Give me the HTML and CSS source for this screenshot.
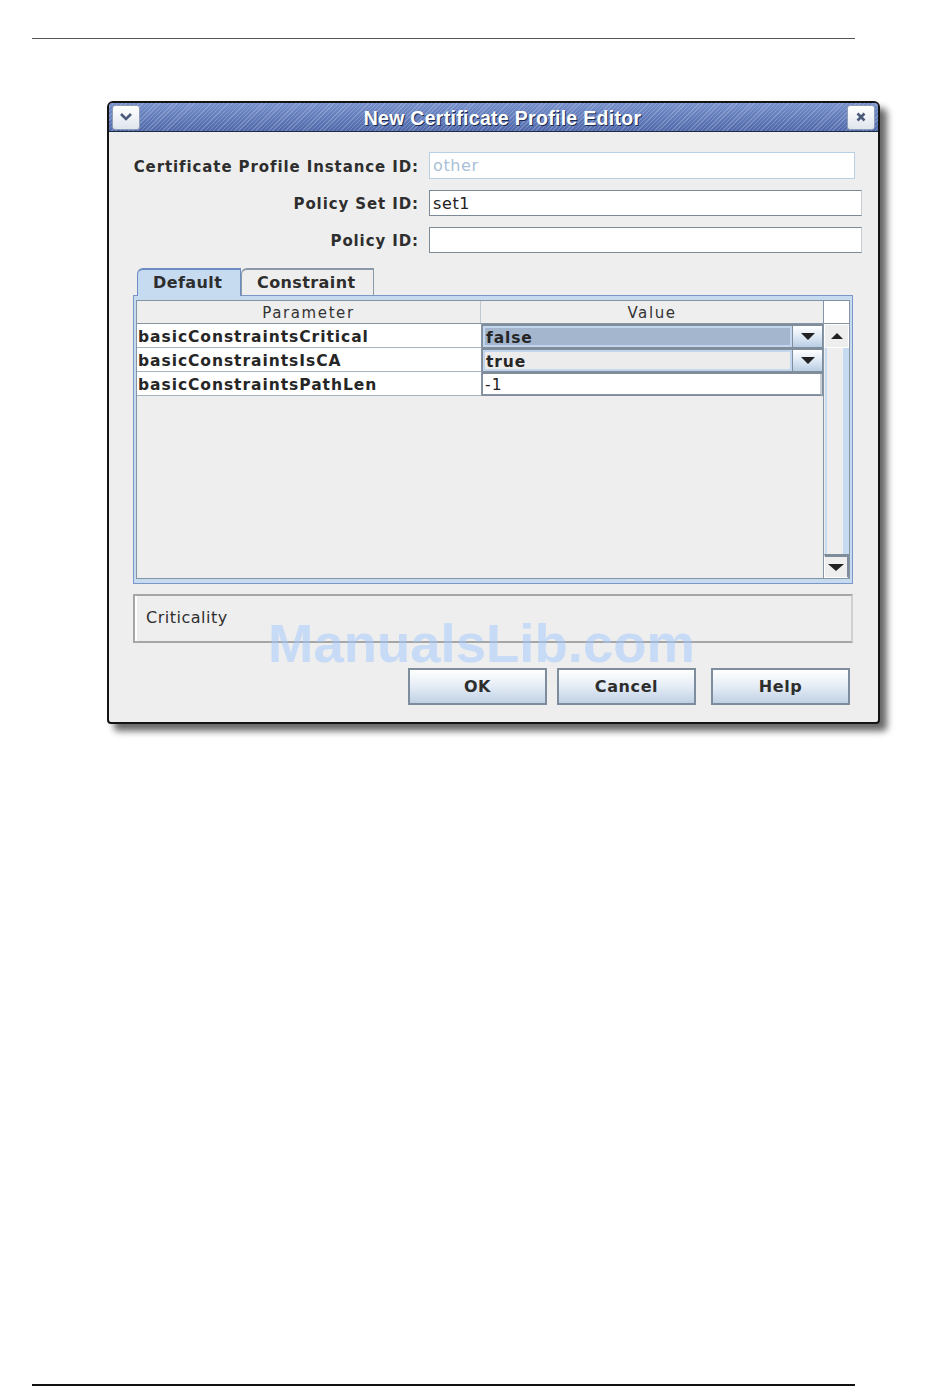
FILE: index.html
```html
<html>
  <head>
    <title>New Certificate Profile Editor</title>
    <link rel="stylesheet" href="styles.css">
  </head>
  <body>
    <div class="rule top"></div>

    <div class="dialog">
      <div class="titlebar">
        <span class="tbtn">
          <svg width="14" height="10" viewBox="0 0 14 10">
            <path d="M2 2 L7 7 L12 2" fill="none" stroke="#4a5a78" stroke-width="2.6" />
          </svg>
        </span>
        <span class="title">New Certificate Profile Editor</span>
        <span class="tbtn">
          <svg width="12" height="12" viewBox="0 0 12 12">
            <path d="M2.5 2.5 L9.5 9.5 M9.5 2.5 L2.5 9.5" stroke="#4a5a78" stroke-width="2.6" />
          </svg>
        </span>
      </div>

      <div class="content">
        <div class="form">
          <div class="label">Certificate Profile Instance ID:</div>
          <div class="field disabled first">other</div>
          <div class="label">Policy Set ID:</div>
          <div class="field">set1</div>
          <div class="label">Policy ID:</div>
          <div class="field"></div>
        </div>

        <div class="tabs">
          <div class="tab active">Default</div>
          <div class="tab">Constraint</div>
        </div>

        <div class="panel">
          <div class="scroll">
            <div class="table">
              <div class="thead">
                <div class="th param">Parameter</div>
                <div class="th">Value</div>
              </div>
              <div class="tr">
                <div class="td param">basicConstraintsCritical</div>
                <div class="td value">
                  <div class="combo selected">
                    <span class="combo-text">false</span>
                    <span class="arrow"><i></i></span>
                  </div>
                </div>
              </div>
              <div class="tr">
                <div class="td param">basicConstraintsIsCA</div>
                <div class="td value">
                  <div class="combo">
                    <span class="combo-text">true</span>
                    <span class="arrow"><i></i></span>
                  </div>
                </div>
              </div>
              <div class="tr">
                <div class="td param">basicConstraintsPathLen</div>
                <div class="td value">
                  <div class="edit">-1</div>
                </div>
              </div>
            </div>
            <div class="vbar">
              <div class="corner"></div>
              <div class="sbtn"><i class="up"></i></div>
              <div class="track"></div>
              <div class="sbtn down"><i></i></div>
            </div>
          </div>
        </div>

        <div class="crit">Criticality</div>

        <div class="buttons">
          <button class="btn">OK</button>
          <button class="btn">Cancel</button>
          <button class="btn help">Help</button>
        </div>

        <div class="watermark">ManualsLib.com</div>
      </div>
    </div>

    <div class="rule bottom"></div>
  </body>
</html>
```

FILE: styles.css
```css
body {
  margin: 0;
  background: #fff;
  font: 15px "DejaVu Sans", sans-serif;
  color: #2e2e2e;
}

.rule {
  margin-left: 32px;
  width: 823px;
}
.rule.top {
  margin-top: 38px;
  height: 1px;
  background: #555;
}
.rule.bottom {
  margin-top: 660px;
  height: 2px;
  background: #111;
}

/* window */
.dialog {
  margin-top: 62px;
  margin-left: 107px;
  width: 769px;
  height: 619px;
  border: 2px solid #141414;
  border-radius: 6px 6px 4px 4px;
  background: #eeeeee;
  box-shadow: 7px 7px 7px rgba(0, 0, 0, 0.6);
  display: flex;
  flex-direction: column;
  overflow: hidden;
}

.titlebar {
  height: 28px;
  border-bottom: 1px solid #1e2a44;
  display: flex;
  align-items: center;
  justify-content: space-between;
  padding: 0 3px;
  background:
    repeating-linear-gradient(135deg, rgba(255, 255, 255, 0.2) 0 1px, transparent 1px 3px),
    linear-gradient(#7690cc, #5069aa);
}
.title {
  font: bold 19.5px "Liberation Sans", sans-serif;
  color: #fff;
  text-shadow: 1px 1px 0 #1d2b4e;
  letter-spacing: 0.3px;
  padding: 3px 0 0 18px;
}
.tbtn {
  width: 28px;
  height: 25px;
  box-sizing: border-box;
  border: 1px solid #8e9cb6;
  border-radius: 3px;
  background: linear-gradient(#ffffff, #dfe5ee);
  display: flex;
  align-items: center;
  justify-content: center;
}

.content {
  position: relative;
  flex: 1;
  padding: 20px 16px 0 24px;
}

/* top form */
.form {
  display: grid;
  grid-template-columns: 286px 1fr;
  column-gap: 10px;
  row-gap: 11px;
  align-items: center;
}
.form .label {
  text-align: right;
  font-weight: bold;
  font-size: 15px;
  letter-spacing: 0.9px;
  padding-top: 2px;
  color: #2e2e2e;
}
.field {
  height: 26px;
  box-sizing: border-box;
  border: 1px solid #7c8a98;
  border-right-color: #c6ccd2;
  background: #fff;
  padding: 3px 3px 0;
  font-size: 16px;
  letter-spacing: 0.6px;
  color: #222;
}
.field.first {
  height: 27px;
  margin-right: 7px;
}
.field.disabled {
  border-color: #b8cfe6;
  color: #a9bfd6;
}

/* tabs */
.tabs {
  display: flex;
  margin-top: 15px;
  padding-left: 4px;
  height: 28px;
  margin-right: 9px;
}
.tab {
  box-sizing: border-box;
  height: 28px;
  border: 1px solid #8a98a8;
  border-top-width: 2px;
  border-bottom: 0;
  border-radius: 6px 0 0 0;
  padding: 3px 0 0 15px;
  width: 133px;
  font-weight: bold;
  font-size: 16px;
  letter-spacing: 0.4px;
  color: #2e2e2e;
}
.tab.active {
  width: 104px;
  background: #c6daf0;
  border-color: #6e8cc4;
}

.panel {
  margin-right: 9px;
  margin-top: -1px;
  height: 279px;
  border: 1px solid #7b97c8;
  background: #c6daf0;
  padding: 4px 2px;
  display: flex;
}

.scroll {
  flex: 1;
  display: flex;
  border: 1px solid #8595a6;
  background: #eeeeee;
}

/* table */
.table {
  width: 686px;
}
.thead {
  display: flex;
  height: 23px;
  box-sizing: border-box;
  border-bottom: 1px solid #8595a6;
}
.th {
  flex: 1;
  text-align: center;
  font-size: 15px;
  letter-spacing: 1.6px;
  color: #333;
  line-height: 24px;
  background: #eee;
}
.th.param {
  flex: 0 0 343px;
  border-right: 1px solid #c0c8d0;
}
.tr {
  display: flex;
  height: 24px;
  box-sizing: border-box;
}
.td.param {
  flex: 0 0 343px;
  background: #fff;
  border-right: 1px solid #8595a6;
  border-bottom: 1px solid #a8b2bc;
  padding-left: 1px;
  font-weight: bold;
  font-size: 15.5px;
  letter-spacing: 0.95px;
  line-height: 26px;
  color: #262626;
}
.td.value {
  flex: 1;
  background: #808e9c;
  padding: 2px 1px 1px 1px;
}

.combo {
  display: flex;
  height: 21px;
  box-sizing: border-box;
}
.combo-text {
  flex: 1;
  border: 2px solid #c2d6ee;
  background: #ececec;
  font-weight: bold;
  font-size: 15.5px;
  letter-spacing: 0.9px;
  line-height: 20px;
  padding-left: 1px;
  color: #262626;
}
.combo.selected .combo-text {
  background: #a3b6cd;
}
.arrow {
  width: 29px;
  margin-left: 1px;
  background: linear-gradient(#ffffff, #dbe6f2 55%, #b9cde3);
  display: flex;
  align-items: center;
  justify-content: center;
}
.arrow i,
.sbtn i {
  width: 0;
  height: 0;
  border-left: 7px solid transparent;
  border-right: 7px solid transparent;
  border-top: 7px solid #222;
}
.edit {
  height: 21px;
  box-sizing: border-box;
  background: #fff;
  border-bottom: 1px solid #8595a6;
  border-right: 2px solid #c8ced4;
  font-size: 15.5px;
  letter-spacing: 1.2px;
  line-height: 23px;
  padding-left: 2px;
  color: #222;
}

/* scrollbar */
.vbar {
  flex: 1;
  display: flex;
  flex-direction: column;
  border-left: 1px solid #8595a6;
}
.corner {
  height: 23px;
  background: #fff;
  border-bottom: 1px solid #8595a6;
  box-sizing: border-box;
}
.sbtn {
  height: 24px;
  box-sizing: border-box;
  background: #eeeeee;
  border: 1px solid #fff;
  display: flex;
  align-items: center;
  justify-content: center;
}
.sbtn .up {
  border-top: 0;
  border-bottom: 6px solid #222;
  border-left-width: 6px;
  border-right-width: 6px;
}
.sbtn.down {
  border-top: 3px solid #7f8d9b;
  border-right: 2px solid #7f8d9b;
  border-left: 1px solid #fff;
}
.sbtn.down i {
  border-left-width: 8px;
  border-right-width: 8px;
}
.track {
  flex: 1;
  background: #eeeeee;
  border-left: 2px solid #c6daf0;
  border-right: 6px solid #c6daf0;
  margin-left: 1px;
}

/* criticality */
.crit {
  margin-top: 10px;
  margin-right: 9px;
  height: 49px;
  box-sizing: border-box;
  border: 2px solid #a6a6a6;
  border-right-color: #cfcfcf;
  box-shadow: inset 2px 0 0 #fff;
  padding: 12px 0 0 11px;
  font-size: 16px;
  letter-spacing: 0.5px;
  color: #2e2e2e;
}

/* buttons */
.buttons {
  display: flex;
  justify-content: flex-end;
  margin-top: 25px;
  margin-right: 12px;
}
.btn {
  width: 139px;
  height: 37px;
  margin-left: 10px;
  border: 2px solid #7d8d9d;
  background: linear-gradient(#ffffff, #e4ecf5 50%, #c0d1e5);
  font: bold 16px "DejaVu Sans", sans-serif;
  letter-spacing: 0.6px;
  color: #2e2e2e;
}
.btn.help {
  margin-left: 15px;
}

.watermark {
  position: absolute;
  left: 159px;
  top: 480px;
  font: bold 54.5px "Liberation Sans", sans-serif;
  color: rgba(160, 200, 255, 0.5);
  pointer-events: none;
}
```
